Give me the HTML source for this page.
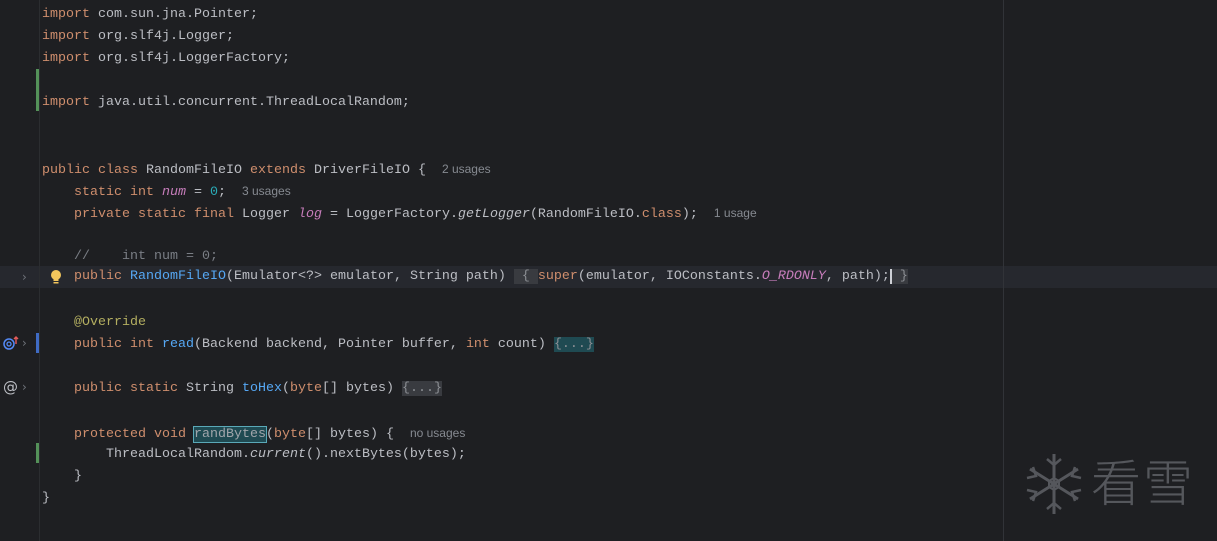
<!DOCTYPE html>
<html><head><meta charset="utf-8"><style>
body{margin:0;width:1217px;height:541px;background:#1e1f22;overflow:hidden;position:relative;font-family:"Liberation Mono",monospace;font-size:13.33px;color:#bcbec4}
.l{position:absolute;left:42px;height:22px;line-height:22px;white-space:pre;margin-top:2px}
.k{color:#cf8e6d}.f{color:#56a8f5}.p{color:#c77dbb;font-style:italic}.n{color:#2aacb8}.c{color:#7a7e85}.a{color:#b3ae60}.i{font-style:italic}
.h{font-family:"Liberation Sans",sans-serif;font-size:12px;color:#868a91}
.fb{background:#393b40;color:#8c8f94}
.ft{background:#1f4a52;color:#8c8f94}
.rb{background:#1f4a52;outline:1px solid #5aa9b8;color:#a0a5ab}
</style></head><body>
<div style="position:absolute;left:0;top:266px;width:1217px;height:22px;background:#26282e"></div>
<div style="position:absolute;left:39px;top:0;width:1px;height:541px;background:#2b2d30"></div>
<div style="position:absolute;left:1003px;top:0;width:1px;height:541px;background:#313338"></div>
<div style="position:absolute;left:36px;top:69px;width:3px;height:42px;background:#549159"></div>
<div style="position:absolute;left:36px;top:443px;width:3px;height:20px;background:#549159"></div>
<div style="position:absolute;left:36px;top:333px;width:3px;height:20px;background:#3f6bc4"></div>
<div style="position:absolute;left:22px;top:266px;line-height:22px;color:#6f737a;font-size:12px;font-family:'DejaVu Sans',sans-serif">›</div>
<div style="position:absolute;left:22px;top:332px;line-height:22px;color:#6f737a;font-size:12px;font-family:'DejaVu Sans',sans-serif">›</div>
<div style="position:absolute;left:22px;top:376px;line-height:22px;color:#6f737a;font-size:12px;font-family:'DejaVu Sans',sans-serif">›</div>
<svg style="position:absolute;left:2px;top:334px" width="18" height="18" viewBox="0 0 18 18"><circle cx="7" cy="10" r="5" fill="none" stroke="#548af7" stroke-width="1.5"/><circle cx="7" cy="10" r="2" fill="none" stroke="#548af7" stroke-width="1.3"/><path d="M14 10V3M12 5l2-2 2 2" stroke="#e55b5b" stroke-width="1.4" fill="none"/></svg>
<div style="position:absolute;left:3px;top:376px;line-height:22px;font-size:15px;color:#bcbec4;font-family:'DejaVu Sans',sans-serif">@</div>
<svg style="position:absolute;left:49px;top:269px" width="14" height="16" viewBox="0 0 14 16"><circle cx="7" cy="6" r="5" fill="#f2c55c"/><rect x="4.5" y="9" width="5" height="3" fill="#f2c55c"/><rect x="4.5" y="13" width="5" height="1.5" fill="#f2c55c"/></svg>

<div class="l" style="top:2px"><span class="k">import</span> com.sun.jna.Pointer;</div>
<div class="l" style="top:24px"><span class="k">import</span> org.slf4j.Logger;</div>
<div class="l" style="top:46px"><span class="k">import</span> org.slf4j.LoggerFactory;</div>
<div class="l" style="top:90px"><span class="k">import</span> java.util.concurrent.ThreadLocalRandom;</div>
<div class="l" style="top:156px"><span class="k">public class</span> RandomFileIO <span class="k">extends</span> DriverFileIO {  <span class="h">2 usages</span></div>
<div class="l" style="top:178px">    <span class="k">static int</span> <span class="p">num</span> = <span class="n">0</span>;  <span class="h">3 usages</span></div>
<div class="l" style="top:200px">    <span class="k">private static final</span> Logger <span class="p">log</span> = LoggerFactory.<span class="i">getLogger</span>(RandomFileIO.<span class="k">class</span>);  <span class="h">1 usage</span></div>
<div class="l" style="top:244px"><span class="c">    //    int num = 0;</span></div>
<div class="l" style="top:264px">    <span class="k">public</span> <span class="f">RandomFileIO</span>(Emulator&lt;?&gt; emulator, String path) <span class="fb"> { </span><span class="k">super</span>(emulator, IOConstants.<span class="p">O_RDONLY</span>, path);<span style="border-left:2px solid #ced0d6"></span><span class="fb"> }</span></div>
<div class="l" style="top:310px">    <span class="a">@Override</span></div>
<div class="l" style="top:332px">    <span class="k">public int</span> <span class="f">read</span>(Backend backend, Pointer buffer, <span class="k">int</span> count) <span class="ft">{...}</span></div>
<div class="l" style="top:376px">    <span class="k">public static</span> String <span class="f">toHex</span>(<span class="k">byte</span>[] bytes) <span class="fb">{...}</span></div>
<div class="l" style="top:420px">    <span class="k">protected void</span> <span class="rb">randBytes</span>(<span class="k">byte</span>[] bytes) {  <span class="h">no usages</span></div>
<div class="l" style="top:442px">        ThreadLocalRandom.<span class="i">current</span>().nextBytes(bytes);</div>
<div class="l" style="top:464px">    }</div>
<div class="l" style="top:486px">}</div>

<svg style="position:absolute;left:1024px;top:450px" width="62" height="68" viewBox="0 0 62 68" stroke="#55575c" stroke-width="3" fill="none"><path d="M30 4v60M6 19l48 30M6 49l48-30"/><path d="M30 28l5 3v6l-5 3-5-3v-6z" stroke-width="2"/><path d="M23 9l7 6 7-6M23 59l7-6 7 6M3 28l9-2-3-9M3 40l9 2-3 9M57 28l-9-2 3-9M57 40l-9 2 3 9" stroke-width="2.5"/></svg>
<div style="position:absolute;left:1091px;top:446px;font-family:'Noto Sans CJK SC',sans-serif;font-size:50px;line-height:68px;color:#55575c;font-weight:300;letter-spacing:2px">看雪</div>
</body></html>
